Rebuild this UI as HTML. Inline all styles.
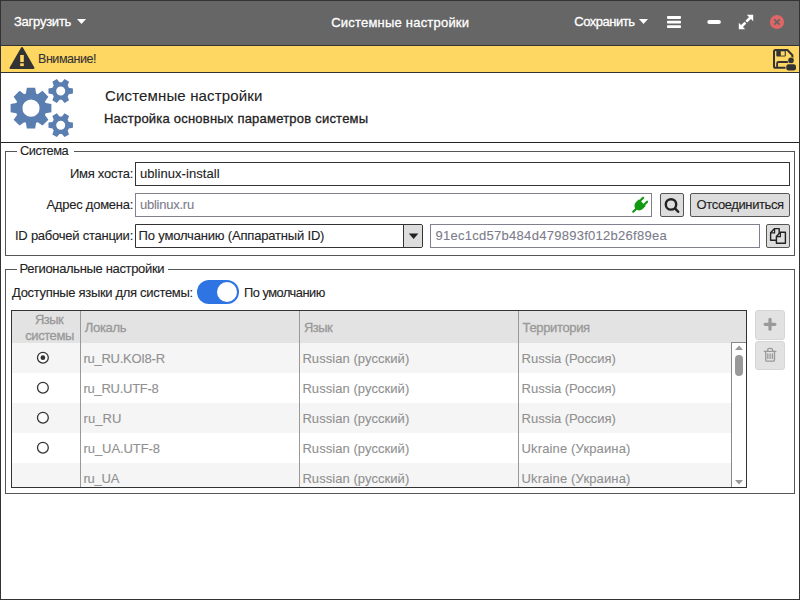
<!DOCTYPE html>
<html><head><meta charset="utf-8">
<style>
*{box-sizing:border-box}
html,body{margin:0;padding:0;width:800px;height:600px;overflow:hidden;background:#fff;font-family:"Liberation Sans",sans-serif}
.a{position:absolute}
.t{position:absolute;white-space:nowrap;line-height:1;font-family:"Liberation Sans",sans-serif}
</style></head><body>
<div class="a" style="left:0;top:0;width:800px;height:600px;border:1px solid #333;background:#fff"></div>
<div class="a" style="left:1px;top:1px;width:798px;height:44px;background:#666"></div>
<div class="a" style="left:1px;top:45px;width:798px;height:1px;background:#333"></div>
<div class="a" style="left:1px;top:46px;width:798px;height:26px;background:#fed662"></div>
<div class="a" style="left:1px;top:72px;width:798px;height:1px;background:#333"></div>
<div class="a" style="left:1px;top:142px;width:798px;height:1px;background:#222"></div>

<!-- frame 1 -->
<div class="a" style="left:5px;top:151px;width:790px;height:105px;border:1px solid #555"></div>
<div class="a" style="left:17px;top:148px;width:57px;height:8px;background:#fff"></div>
<div class="a" style="left:135px;top:162px;width:655px;height:24px;border:1px solid #333;background:#fff"></div>
<div class="a" style="left:135px;top:193px;width:517px;height:24px;border:1px solid #80808f;background:#fff"></div>
<div class="a" style="left:660px;top:193px;width:24px;height:24px;border:1px solid #555;border-radius:2px;background:#ddd"></div>
<div class="a" style="left:690px;top:193px;width:100px;height:24px;border:1px solid #555;border-radius:2px;background:#ddd"></div>
<div class="a" style="left:135px;top:224px;width:288px;height:24px;border:1px solid #333;border-radius:0 2px 2px 0;background:#fff"></div>
<div class="a" style="left:403px;top:225px;width:19px;height:22px;border-left:1px solid #333;border-radius:0 1px 1px 0;background:#ddd"></div>
<div class="a" style="left:430px;top:224px;width:330px;height:24px;border:1px solid #80808f;background:#fff"></div>
<div class="a" style="left:766px;top:224px;width:24px;height:24px;border:1px solid #555;border-radius:2px;background:#ddd"></div>

<!-- frame 2 -->
<div class="a" style="left:5px;top:269px;width:790px;height:225px;border:1px solid #555"></div>
<div class="a" style="left:17px;top:265px;width:151px;height:8px;background:#fff"></div>
<div class="a" style="left:197px;top:280px;width:42px;height:24px;border-radius:12px;background:#2e74e2"></div>
<div class="a" style="left:217px;top:282px;width:20px;height:20px;border-radius:50%;background:#fff"></div>

<!-- table -->
<div class="a" style="left:11px;top:310px;width:736px;height:178px;border:1px solid #333;background:#fff;overflow:hidden">
  <div class="a" style="left:0;top:0;width:734px;height:32px;background:#e3e3e3"></div>
  <div class="a" style="left:0;top:32px;width:720px;height:30px;background:#f5f5f5"></div>
  <div class="a" style="left:0;top:92px;width:720px;height:30px;background:#f5f5f5"></div>
  <div class="a" style="left:0;top:152px;width:720px;height:30px;background:#f5f5f5"></div>
  <div class="a" style="left:68px;top:0;width:1px;height:176px;background:#999"></div>
  <div class="a" style="left:287px;top:0;width:1px;height:176px;background:#999"></div>
  <div class="a" style="left:506px;top:0;width:1px;height:176px;background:#999"></div>
  <div class="a" style="left:719px;top:31px;width:16px;height:146px;border-left:1px solid #888;border-top:1px solid #888;background:#fff"></div>
</div>
<div class="a" style="left:755px;top:310px;width:30px;height:30px;border:1px solid #d6d6d6;border-radius:3px;background:#e2e2e2"></div>
<div class="a" style="left:755px;top:341px;width:30px;height:29px;border:1px solid #d6d6d6;border-radius:3px;background:#e2e2e2"></div>

<div class="t" style="left:14.00px;top:15px;font-size:13px;color:#fff;letter-spacing:-0.250px;-webkit-text-stroke:0.3px #fff;">Загрузить</div>
<div class="t" style="left:331.25px;top:16px;font-size:13px;color:#fff;letter-spacing:0.208px;-webkit-text-stroke:0.3px #fff;">Системные настройки</div>
<div class="t" style="left:574.25px;top:15px;font-size:13px;color:#fff;letter-spacing:-0.481px;-webkit-text-stroke:0.3px #fff;">Сохранить</div>
<div class="t" style="left:37.63px;top:52px;font-size:13px;color:#333;letter-spacing:-0.500px;-webkit-text-stroke:0.1px #333;transform:scaleX(0.9661);transform-origin:0 0;">Внимание!</div>
<div class="t" style="left:105.00px;top:88px;font-size:15px;color:#222;letter-spacing:0.150px;-webkit-text-stroke:0.1px #222;">Системные настройки</div>
<div class="t" style="left:104.00px;top:112px;font-size:13px;color:#222;letter-spacing:0.217px;-webkit-text-stroke:0.3px #222;">Настройка основных параметров системы</div>
<div class="t" style="left:20.40px;top:144px;font-size:13px;color:#222;letter-spacing:-0.500px;-webkit-text-stroke:0.1px #222;transform:scaleX(0.9840);transform-origin:0 0;">Система</div>
<div class="t" style="left:70.00px;top:167px;font-size:13px;color:#222;letter-spacing:-0.267px;-webkit-text-stroke:0.1px #222;">Имя хоста:</div>
<div class="t" style="left:140.00px;top:167px;font-size:13px;color:#222;letter-spacing:0.054px;-webkit-text-stroke:0.1px #222;">ublinux-install</div>
<div class="t" style="left:46.40px;top:198px;font-size:13px;color:#222;letter-spacing:-0.233px;-webkit-text-stroke:0.1px #222;">Адрес домена:</div>
<div class="t" style="left:140.00px;top:198px;font-size:13px;color:#7c7c8a;letter-spacing:-0.250px;-webkit-text-stroke:0.1px #7c7c8a;">ublinux.ru</div>
<div class="t" style="left:696.50px;top:198px;font-size:13px;color:#222;letter-spacing:-0.392px;-webkit-text-stroke:0.1px #222;">Отсоединиться</div>
<div class="t" style="left:15.00px;top:229px;font-size:13px;color:#222;letter-spacing:-0.244px;-webkit-text-stroke:0.1px #222;">ID рабочей станции:</div>
<div class="t" style="left:138.60px;top:229px;font-size:13px;color:#222;letter-spacing:-0.180px;-webkit-text-stroke:0.1px #222;">По умолчанию (Аппаратный ID)</div>
<div class="t" style="left:435.50px;top:229px;font-size:13px;color:#7c7c8a;letter-spacing:0.277px;-webkit-text-stroke:0.1px #7c7c8a;">91ec1cd57b484d479893f012b26f89ea</div>
<div class="t" style="left:19.50px;top:262px;font-size:13px;color:#222;letter-spacing:-0.345px;-webkit-text-stroke:0.1px #222;">Региональные настройки</div>
<div class="t" style="left:12.00px;top:286px;font-size:13px;color:#222;letter-spacing:-0.315px;-webkit-text-stroke:0.1px #222;">Доступные языки для системы:</div>
<div class="t" style="left:243.61px;top:286px;font-size:13px;color:#222;letter-spacing:-0.500px;-webkit-text-stroke:0.1px #222;transform:scaleX(0.9865);transform-origin:0 0;">По умолчанию</div>
<div class="t" style="left:35.00px;top:313px;font-size:13px;color:#999;letter-spacing:-0.500px;-webkit-text-stroke:0.3px #999;transform:scaleX(0.9915);transform-origin:0 0;">Язык</div>
<div class="t" style="left:25.25px;top:329px;font-size:13px;color:#999;letter-spacing:-0.425px;-webkit-text-stroke:0.3px #999;">системы</div>
<div class="t" style="left:84.80px;top:321px;font-size:13px;color:#999;letter-spacing:-0.320px;-webkit-text-stroke:0.3px #999;">Локаль</div>
<div class="t" style="left:303.70px;top:321px;font-size:13px;color:#999;letter-spacing:-0.500px;-webkit-text-stroke:0.3px #999;transform:scaleX(0.9898);transform-origin:0 0;">Язык</div>
<div class="t" style="left:522.60px;top:321px;font-size:13px;color:#999;letter-spacing:-0.356px;-webkit-text-stroke:0.3px #999;">Территория</div>
<div class="t" style="left:83.50px;top:352px;font-size:13px;color:#909090;letter-spacing:-0.273px;-webkit-text-stroke:0.1px #909090;">ru_RU.KOI8-R</div>
<div class="t" style="left:302.40px;top:352px;font-size:13px;color:#909090;letter-spacing:0.062px;-webkit-text-stroke:0.1px #909090;">Russian (русский)</div>
<div class="t" style="left:521.60px;top:352px;font-size:13px;color:#909090;letter-spacing:-0.021px;-webkit-text-stroke:0.1px #909090;">Russia (Россия)</div>
<div class="t" style="left:83.50px;top:382px;font-size:13px;color:#909090;letter-spacing:-0.270px;-webkit-text-stroke:0.1px #909090;">ru_RU.UTF-8</div>
<div class="t" style="left:302.40px;top:382px;font-size:13px;color:#909090;letter-spacing:0.062px;-webkit-text-stroke:0.1px #909090;">Russian (русский)</div>
<div class="t" style="left:521.60px;top:382px;font-size:13px;color:#909090;letter-spacing:-0.021px;-webkit-text-stroke:0.1px #909090;">Russia (Россия)</div>
<div class="t" style="left:83.50px;top:412px;font-size:13px;color:#909090;letter-spacing:0.100px;-webkit-text-stroke:0.1px #909090;">ru_RU</div>
<div class="t" style="left:302.40px;top:412px;font-size:13px;color:#909090;letter-spacing:0.062px;-webkit-text-stroke:0.1px #909090;">Russian (русский)</div>
<div class="t" style="left:521.60px;top:412px;font-size:13px;color:#909090;letter-spacing:-0.021px;-webkit-text-stroke:0.1px #909090;">Russia (Россия)</div>
<div class="t" style="left:83.50px;top:442px;font-size:13px;color:#909090;letter-spacing:-0.070px;-webkit-text-stroke:0.1px #909090;">ru_UA.UTF-8</div>
<div class="t" style="left:302.40px;top:442px;font-size:13px;color:#909090;letter-spacing:0.062px;-webkit-text-stroke:0.1px #909090;">Russian (русский)</div>
<div class="t" style="left:521.60px;top:442px;font-size:13px;color:#909090;letter-spacing:0.138px;-webkit-text-stroke:0.1px #909090;">Ukraine (Украина)</div>
<div class="t" style="left:83.50px;top:472px;font-size:13px;color:#909090;letter-spacing:-0.250px;-webkit-text-stroke:0.1px #909090;">ru_UA</div>
<div class="t" style="left:302.40px;top:472px;font-size:13px;color:#909090;letter-spacing:0.062px;-webkit-text-stroke:0.1px #909090;">Russian (русский)</div>
<div class="t" style="left:521.60px;top:472px;font-size:13px;color:#909090;letter-spacing:0.138px;-webkit-text-stroke:0.1px #909090;">Ukraine (Украина)</div>

<svg class="a" style="left:0;top:0" width="800" height="600" viewBox="0 0 800 600">
  <path d="M77,19 L86,19 L81.5,24 Z" fill="#fff"/>
  <path d="M639,19 L648,19 L643.5,24 Z" fill="#fff"/>
  <rect x="667" y="16.1" width="14" height="2.8" rx="0.8" fill="#fff"/>
  <rect x="667" y="20.8" width="14" height="2.8" rx="0.8" fill="#fff"/>
  <rect x="667" y="25.2" width="14" height="2.8" rx="0.8" fill="#fff"/>
  <rect x="707.3" y="20" width="13.6" height="4" rx="2" fill="#fff"/>
  <g stroke="#fff" stroke-width="2.6" fill="none"><path d="M751,17 L746.3,21.7"/><path d="M741,27 L745.4,22.6"/></g>
  <path d="M746.8,14.8 L753.2,14.8 L753.2,21.2 Z" fill="#fff"/>
  <path d="M738.8,22.8 L738.8,29.2 L745.2,29.2 Z" fill="#fff"/>
  <circle cx="777" cy="22" r="7.1" fill="#e06666"/>
  <g stroke="#666" stroke-width="1.8"><path d="M774.3,19.3 L779.7,24.7"/><path d="M779.7,19.3 L774.3,24.7"/></g>
  <path d="M22,48 L33.5,68 L10.5,68 Z" fill="#333" stroke="#333" stroke-width="2" stroke-linejoin="round"/>
  <rect x="20.2" y="55" width="3.6" height="7" fill="#fed662"/>
  <rect x="20.2" y="63.3" width="3.6" height="2.8" fill="#fed662"/>
  <path d="M792.4,58.5 L792.4,55.2 L787.4,50 L775.6,50 Q774,50 774,51.6 L774,66.2 Q774,67.8 775.6,67.8 L787,67.8" fill="none" stroke="#333" stroke-width="2" stroke-linejoin="round"/>
  <rect x="776.3" y="50" width="9.5" height="6.6" rx="1" fill="#333"/>
  <rect x="780.8" y="51.3" width="3.9" height="4.3" fill="#fed662"/>
  <path d="M777.1,67.8 L777.1,63.4 Q777.1,62 778.5,62 L789,62" fill="none" stroke="#333" stroke-width="1.8"/>
  <circle cx="791" cy="60.4" r="3.4" fill="#fed662"/>
  <circle cx="791" cy="60.4" r="2.8" fill="#333"/>
  <rect x="785.5" y="63.4" width="11.3" height="7.9" rx="3" fill="#fed662"/>
  <rect x="786.3" y="64.2" width="9.7" height="6.4" rx="2.4" fill="#333"/>
  <g fill="#5a7eb0" fill-rule="evenodd">
    <path d="M25.90,93.56L26.83,87.82L35.17,87.82L36.10,93.56A15.5,15.5 0 0 1 37.74,94.24L37.74,94.24L42.46,90.84L48.36,96.74L44.96,101.46A15.5,15.5 0 0 1 45.64,103.10L45.64,103.10L51.38,104.03L51.38,112.37L45.64,113.30A15.5,15.5 0 0 1 44.96,114.94L44.96,114.94L48.36,119.66L42.46,125.56L37.74,122.16A15.5,15.5 0 0 1 36.10,122.84L36.10,122.84L35.17,128.58L26.83,128.58L25.90,122.84A15.5,15.5 0 0 1 24.26,122.16L24.26,122.16L19.54,125.56L13.64,119.66L17.04,114.94A15.5,15.5 0 0 1 16.36,113.30L16.36,113.30L10.62,112.37L10.62,104.03L16.36,103.10A15.5,15.5 0 0 1 17.04,101.46L17.04,101.46L13.64,96.74L19.54,90.84L24.26,94.24A15.5,15.5 0 0 1 25.90,93.56ZM39.6,108.2A8.6,8.6 0 1 0 22.4,108.2A8.6,8.6 0 1 0 39.6,108.2Z"/>
    <path d="M68.85,87.68L72.93,88.42L72.93,93.58L68.85,94.32A8.8,8.8 0 0 1 67.65,96.40L67.65,96.40L69.05,100.30L64.58,102.88L61.90,99.72A8.8,8.8 0 0 1 59.50,99.72L59.50,99.72L56.82,102.88L52.35,100.30L53.75,96.40A8.8,8.8 0 0 1 52.55,94.32L52.55,94.32L48.47,93.58L48.47,88.42L52.55,87.68A8.8,8.8 0 0 1 53.75,85.60L53.75,85.60L52.35,81.70L56.82,79.12L59.50,82.28A8.8,8.8 0 0 1 61.90,82.28L61.90,82.28L64.58,79.12L69.05,81.70L67.65,85.60A8.8,8.8 0 0 1 68.85,87.68ZM65.2,91A4.5,4.5 0 1 0 56.2,91A4.5,4.5 0 1 0 65.2,91Z"/>
    <path d="M68.85,121.88L72.93,122.62L72.93,127.78L68.85,128.52A8.8,8.8 0 0 1 67.65,130.60L67.65,130.60L69.05,134.50L64.58,137.08L61.90,133.92A8.8,8.8 0 0 1 59.50,133.92L59.50,133.92L56.82,137.08L52.35,134.50L53.75,130.60A8.8,8.8 0 0 1 52.55,128.52L52.55,128.52L48.47,127.78L48.47,122.62L52.55,121.88A8.8,8.8 0 0 1 53.75,119.80L53.75,119.80L52.35,115.90L56.82,113.32L59.50,116.48A8.8,8.8 0 0 1 61.90,116.48L61.90,116.48L64.58,113.32L69.05,115.90L67.65,119.80A8.8,8.8 0 0 1 68.85,121.88ZM65.2,125.2A4.5,4.5 0 1 0 56.2,125.2A4.5,4.5 0 1 0 65.2,125.2Z"/>
  </g>
  <g transform="translate(640.3,204.6) rotate(-45)" fill="#119911" stroke="#119911" stroke-linecap="round">
    <line x1="-10" y1="0" x2="-4" y2="0" stroke-width="2.2"/>
    <path d="M-1.5,-4.8 L2.8,-4.8 L2.8,4.8 L-1.5,4.8 A4.8,4.8 0 0 1 -1.5,-4.8 Z" stroke="none"/>
    <line x1="2" y1="-2.8" x2="6.8" y2="-2.8" stroke-width="2.2"/>
    <line x1="2" y1="2.8" x2="6.8" y2="2.8" stroke-width="2.2"/>
  </g>
  <circle cx="671" cy="204.4" r="5.2" fill="none" stroke="#222" stroke-width="2.4"/>
  <line x1="675" y1="208.4" x2="678.2" y2="211.8" stroke="#222" stroke-width="2.4" stroke-linecap="round"/>
  <path d="M408.8,233.6 L418.4,233.6 L413.6,238.9 Z" fill="#222"/>
  <path d="M774.6,228.6 L779.2,228.6 L779.2,240.2 L770.6,240.2 L770.6,232.8 Z" fill="#ddd" stroke="#222" stroke-width="1.4" stroke-linejoin="round"/>
  <path d="M770.6,232.8 L774.6,232.8 L774.6,228.6" fill="none" stroke="#222" stroke-width="1.2"/>
  <path d="M780.4,232.3 L785.4,232.3 L785.4,243.3 L776.4,243.3 L776.4,236.6 Z" fill="#ddd" stroke="#222" stroke-width="1.4" stroke-linejoin="round"/>
  <path d="M776.4,236.6 L780.4,236.6 L780.4,232.3" fill="none" stroke="#222" stroke-width="1.2"/>
  <g stroke="#999" stroke-width="3.2" stroke-linecap="round">
    <line x1="765.2" y1="324.3" x2="774.8" y2="324.3"/>
    <line x1="770" y1="319.4" x2="770" y2="329.2"/>
  </g>
  <g stroke="#999" stroke-width="1.3" fill="none" stroke-linecap="round">
    <line x1="764.3" y1="351.3" x2="775.9" y2="351.3"/>
    <path d="M767.6,351 L767.6,350.2 Q767.6,348.4 769.4,348.4 L770.8,348.4 Q772.6,348.4 772.6,350.2 L772.6,351"/>
    <path d="M765.7,351.5 L765.7,360 Q765.7,361.2 767,361.2 L773.2,361.2 Q774.5,361.2 774.5,360 L774.5,351.5"/>
    <line x1="767.8" y1="354" x2="767.8" y2="358.4"/>
    <line x1="770.1" y1="354" x2="770.1" y2="358.4"/>
    <line x1="772.4" y1="354" x2="772.4" y2="358.4"/>
  </g>
  <circle cx="42.9" cy="357.7" r="5.4" fill="#fff" stroke="#333" stroke-width="1.3"/>
  <circle cx="42.9" cy="387.7" r="5.4" fill="#fff" stroke="#333" stroke-width="1.3"/>
  <circle cx="42.9" cy="417.7" r="5.4" fill="#fff" stroke="#333" stroke-width="1.3"/>
  <circle cx="42.9" cy="447.7" r="5.4" fill="#fff" stroke="#333" stroke-width="1.3"/>
  <circle cx="42.9" cy="357.7" r="2.4" fill="#333"/>
  <path d="M735,350 L743,350 L739,345.6 Z" fill="#999"/>
  <rect x="735" y="355" width="8" height="21" rx="4" fill="#999"/>
  <path d="M735,480 L743,480 L739,484.4 Z" fill="#999"/>
</svg>
</body></html>
